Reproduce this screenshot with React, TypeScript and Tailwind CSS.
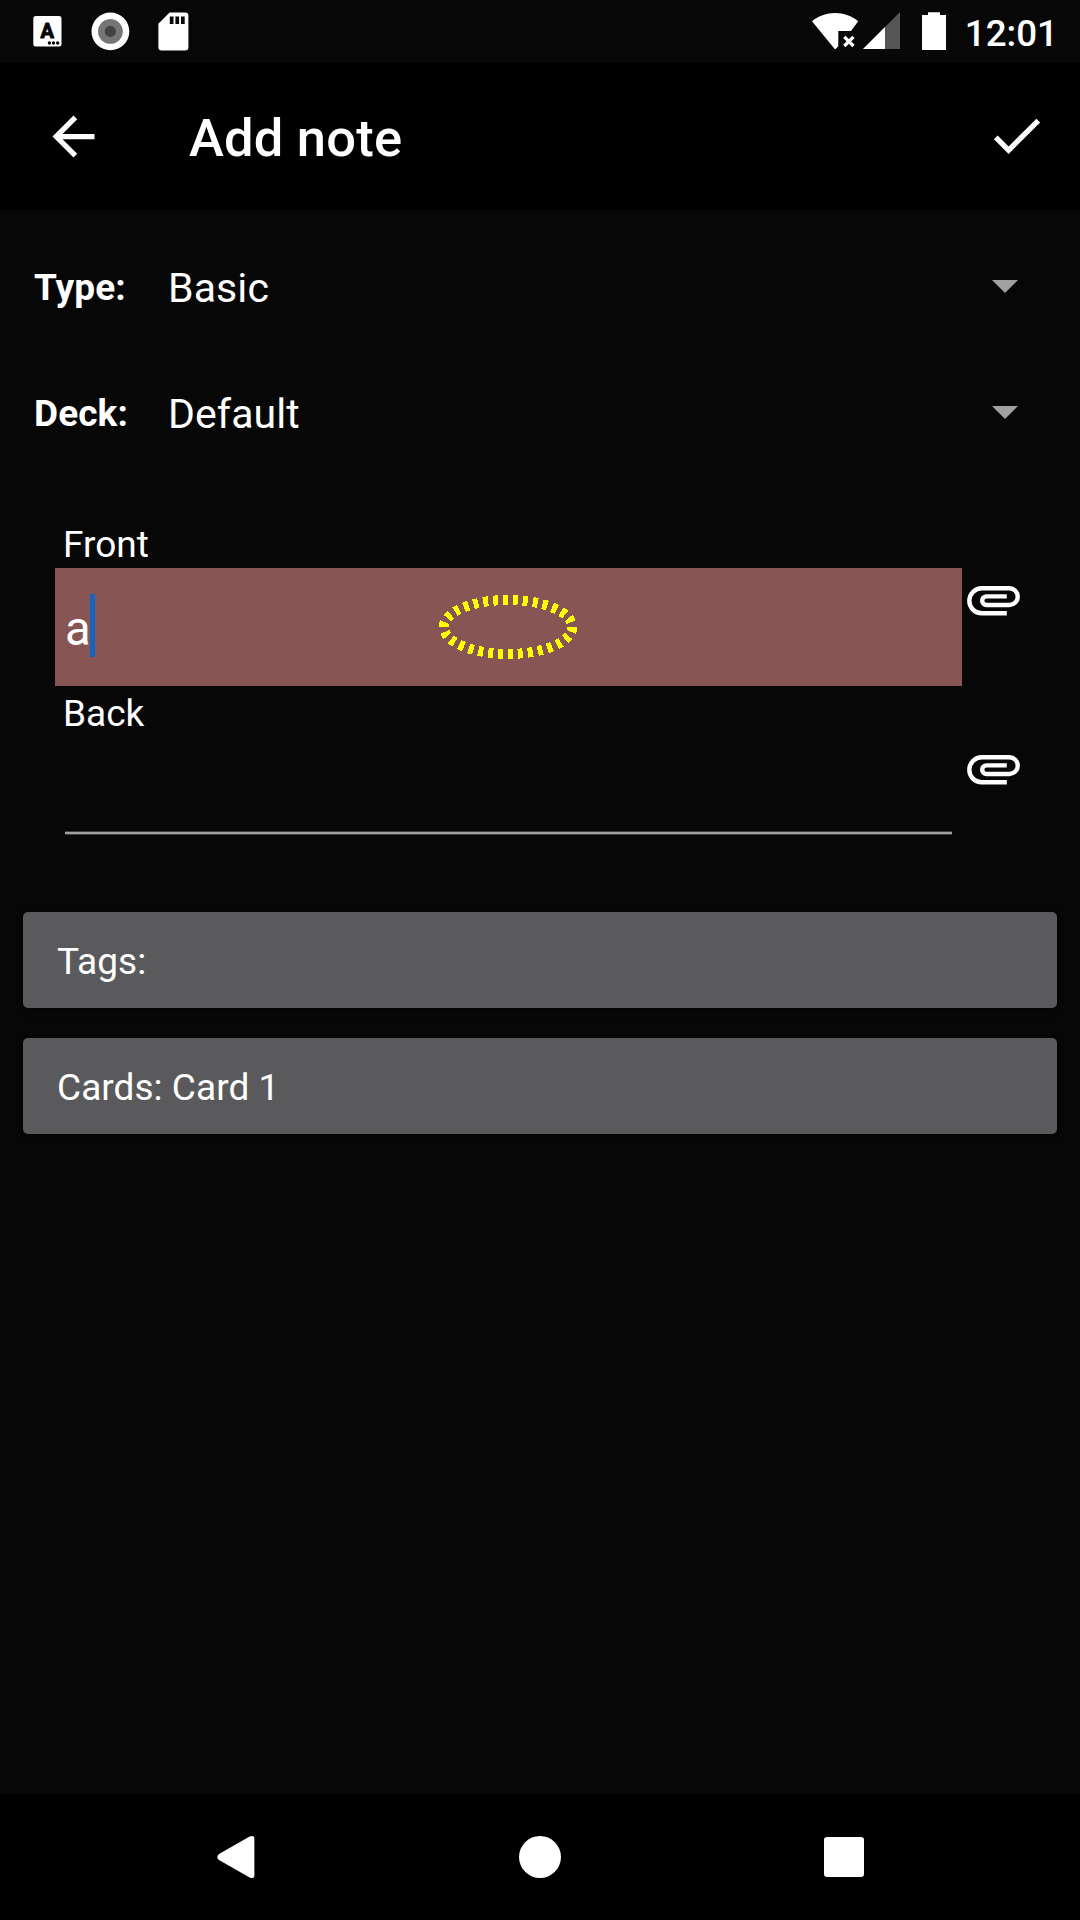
import type { ReactNode } from "react";

function StatusBar() {
  return (
    <div className="flex h-[63px] justify-between bg-[#070707]">
      <div className="flex">
        <svg className="ml-[33px] h-[63px] w-[29px]" viewBox="0 0 29 63">
          <rect x="0.3" y="16" width="28.2" height="30.6" rx="2.5" fill="#fff" />
          <text
            x="14.3"
            y="38"
            textAnchor="middle"
            fontFamily="Roboto"
            fontWeight="700"
            fontSize="20"
            fill="#070707"
            stroke="#070707"
            strokeWidth="1"
            strokeLinejoin="round"
          >
            A
          </text>
          <circle cx="16.4" cy="43" r="1.7" fill="#070707" />
          <circle cx="20.5" cy="43" r="1.7" fill="#070707" />
          <circle cx="24.7" cy="43" r="1.7" fill="#070707" />
        </svg>
        <svg className="ml-[29px] h-[63px] w-[39px]" viewBox="0 0 39 63">
          <circle cx="19.4" cy="31.4" r="18.9" fill="#fff" />
          <circle cx="19.4" cy="31.4" r="12.4" fill="#757575" />
          <circle cx="19.4" cy="31.4" r="5.6" fill="#424242" />
        </svg>
        <svg className="ml-[28px] h-[63px] w-[31px]" viewBox="0 0 31 63">
          <path
            d="M11.6 12.6H27.2a3.2 3.2 0 0 1 3.2 3.2V47.2a3.2 3.2 0 0 1-3.2 3.2H3.6a3.2 3.2 0 0 1-3.2-3.2V23.8z"
            fill="#fff"
          />
          <path d="M11.8 16.4h3.7v7.6h-3.7zM17.4 16.4h3.7v7.6h-3.7zM23 16.4h3.7v7.6H23z" fill="#070707" />
        </svg>
      </div>
      <div className="flex">
        <svg className="h-[63px] w-[47px]" viewBox="0 0 47 63">
          <path
            d="M0 21.2C6.4 16 14.4 13 23.1 13s16.7 3 23.1 8.2L39 31H26.3v15.2L23.1 49.6z"
            fill="#fff"
          />
          <path d="M32.3 36.8l9.2 9.2M41.5 36.8l-9.2 9.2" stroke="#fff" strokeWidth="3.2" />
        </svg>
        <svg className="ml-[4px] h-[63px] w-[37px]" viewBox="0 0 37 63">
          <path d="M37 12V49H0z" fill="#555" />
          <path d="M22 27V49H0z" fill="#fff" />
        </svg>
        <svg className="ml-[22px] h-[63px] w-[24px]" viewBox="0 0 24 63">
          <path d="M6 12.3h12v2.7h6v35H0V15h6z" fill="#fff" />
        </svg>
        <div className="mr-[22px] ml-[19px] pt-[2px] text-[36.75px] leading-[63px] font-medium">12:01</div>
      </div>
    </div>
  );
}

function Toolbar() {
  return (
    <div className="flex h-[147px] items-center bg-black pr-[32px] pl-[42px]">
      <svg className="size-[63px]" viewBox="0 0 24 24" fill="#fff">
        <path d="M20 11H7.83l5.59-5.59L12 4l-8 8 8 8 1.41-1.41L7.83 13H20v-2z" />
      </svg>
      <h1 className="ml-[84px] grow pt-[2px] text-[52.5px] leading-[60px] font-medium tracking-[0.2px]">Add note</h1>
      <svg className="mb-[2px] size-[63px]" viewBox="0 0 24 24" fill="#fff">
        <path d="M9 16.17L4.83 12l-1.42 1.41L9 19 21 7l-1.41-1.41z" />
      </svg>
    </div>
  );
}

function Spinner({ label, value }: { label: string; value: string }) {
  return (
    <div className="flex h-[126px] items-center pr-[62.5px] pl-[34px]">
      <div className="w-[134px] pt-[2px] text-[37px] leading-[44px] font-bold tracking-[0.1px]">{label}</div>
      <div className="grow pt-[2px] text-[41px] leading-[50px] tracking-[0.1px]">{value}</div>
      <svg className="mb-[2px] h-[13px] w-[26px]" viewBox="0 0 26 13">
        <path d="M0 0h26L13 13z" fill="#a0a0a0" />
      </svg>
    </div>
  );
}

function Paperclip() {
  return (
    <svg className="mt-[18px] ml-[5px] h-[30px] w-[53px]" viewBox="0 0 53 30" fill="none">
      <path
        d="M39.8 27.3H14.8A12.5 12.5 0 0 1 14.8 2.3H42.4A8.35 8.35 0 0 1 42.4 19H19.5A4.3 4.3 0 0 1 19.5 10.4H39.8"
        stroke="#fff"
        strokeWidth="4.4"
      />
    </svg>
  );
}

function Field({ label, children }: { label: string; children: ReactNode }) {
  return (
    <div className="pl-[55px]">
      <div className="h-[51px] pt-[2px] pl-[8px] text-[37px] leading-[51px]">{label}</div>
      <div className="flex h-[118px]">
        {children}
        <Paperclip />
      </div>
    </div>
  );
}

function CardButton({ children }: { children: ReactNode }) {
  return (
    <button className="flex h-[96px] items-center rounded-[5px] bg-[#5a5a5c] pt-[4px] pl-[34px] text-left text-[37px] leading-[44px] tracking-[0.05px] shadow-[0_3px_6px_rgba(0,0,0,0.4)]">
      {children}
    </button>
  );
}

export default function App() {
  return (
    <div className="flex h-[1920px] w-[1080px] flex-col bg-[#070707] font-['Roboto',sans-serif] text-white">
      <StatusBar />
      <Toolbar />
      <main className="flex grow flex-col pt-[14px]">
        <Spinner label="Type:" value="Basic" />
        <Spinner label="Deck:" value="Default" />
        <div className="mt-[41px]">
          <Field label="Front">
            <div className="relative flex w-[907px] items-center bg-[#885555] pl-[10px]">
              <span className="pt-[3px] text-[47.25px] leading-[56px]">a</span>
              <span className="absolute top-[26px] left-[35px] h-[63px] w-[5px] bg-[#1565c0]" />
              <svg className="absolute top-[26px] left-[382px] h-[66px] w-[142px]" viewBox="0 0 142 66">
                <ellipse
                  cx="71"
                  cy="33"
                  rx="64.3"
                  ry="27"
                  pathLength={300}
                  fill="none"
                  stroke="#ff0"
                  strokeWidth="10"
                  strokeDasharray="5 5"
                  shapeRendering="crispEdges"
                />
              </svg>
            </div>
          </Field>
          <Field label="Back">
            <div className="flex w-[907px] items-end px-[10px] pb-[20px]">
              <div className="h-[4px] grow border-y border-[#3c3c3c] bg-[#a09f9f]" />
            </div>
          </Field>
        </div>
        <div className="mt-[57px] flex flex-col gap-[30px] px-[23px]">
          <CardButton>Tags:</CardButton>
          <CardButton>Cards: Card 1</CardButton>
        </div>
      </main>
      <nav className="flex h-[126px] items-center justify-center bg-black">
        <div className="flex w-[304px] justify-center">
          <svg className="h-[44px] w-[38px]" viewBox="0 0 38 44">
            <path d="M1.6 19.2L32.6 1.6Q37.4 -0.6 37.4 4V40Q37.4 44.6 32.6 42.4L1.6 24.8Q-1 22 1.6 19.2z" fill="#fff" />
          </svg>
        </div>
        <div className="flex w-[304px] justify-center">
          <div className="size-[42px] rounded-full bg-white" />
        </div>
        <div className="flex w-[304px] justify-center">
          <div className="size-[40px] rounded-[3px] bg-white" />
        </div>
      </nav>
    </div>
  );
}
